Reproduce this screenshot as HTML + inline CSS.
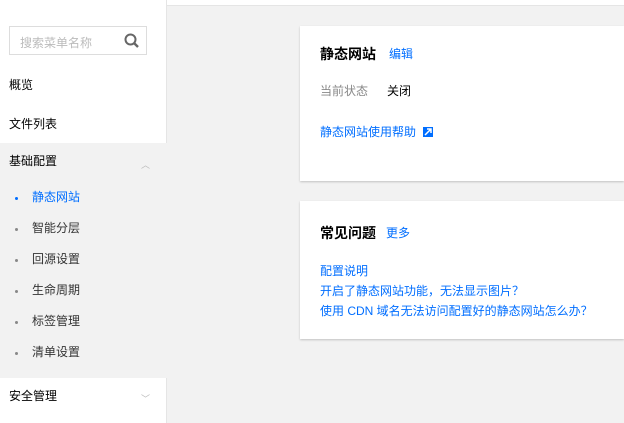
<!DOCTYPE html><html><head><meta charset="utf-8"><style>
*{margin:0;padding:0;box-sizing:border-box}
body{width:624px;height:423px;overflow:hidden;background:#f2f2f2;font-family:"Liberation Sans","Noto Sans CJK SC",sans-serif;font-size:12px;color:#000;position:relative}
.side{position:absolute;left:0;top:0;width:167px;height:423px;background:#fff;border-right:1px solid #e5e5e5}
.search{position:absolute;left:9px;top:26px;width:138px;height:29px;border:1px solid #ddd;color:#bbb;padding:7px 0 0 10px}
.it{position:absolute;left:9px;line-height:16px}
.grp{position:absolute;left:0;top:143px;width:167px;height:235px;background:#f2f2f2}
.sub{position:absolute;left:32px;color:#333;line-height:16px}
.dot{position:absolute;left:15px;width:3px;height:3px;border-radius:50%;background:#888}
.card{position:absolute;left:300px;width:324px;background:#fff;box-shadow:0 1px 2px rgba(0,0,0,.2)}
a{color:#006eff;text-decoration:none}
.t{position:absolute;left:20px;font-weight:bold;font-size:14px}
.arr{position:absolute;left:141px;color:#bbb;font-size:9px}
</style></head><body>
<div style="position:absolute;left:167px;top:0;width:457px;height:6px;background:#fff;border-bottom:1px solid #e5e5e5"></div>
<div class="side">
<div class="search">搜索菜单名称
<svg style="position:absolute;right:6px;top:6px" width="16" height="16" viewBox="0 0 16 16"><circle cx="6.5" cy="6.5" r="5" fill="none" stroke="#666" stroke-width="2"/><path d="M10 10l4 4" stroke="#666" stroke-width="2.4"/></svg></div>
<div class="it" style="top:77px">概览</div>
<div class="it" style="top:116px">文件列表</div>
<div class="grp"></div>
<div class="it" style="top:153px">基础配置</div><div class="arr" style="top:158px">︿</div>
<div class="dot" style="top:197px;background:#006eff"></div><div class="sub" style="top:189px;color:#006eff">静态网站</div>
<div class="dot" style="top:228px"></div><div class="sub" style="top:220px">智能分层</div>
<div class="dot" style="top:259px"></div><div class="sub" style="top:251px">回源设置</div>
<div class="dot" style="top:290px"></div><div class="sub" style="top:282px">生命周期</div>
<div class="dot" style="top:321px"></div><div class="sub" style="top:313px">标签管理</div>
<div class="dot" style="top:352px"></div><div class="sub" style="top:344px">清单设置</div>
<div class="it" style="top:388px">安全管理</div><div class="arr" style="top:392px">﹀</div>
</div>
<div class="card" style="top:26px;height:155px">
<div class="t" style="top:18px">静态网站</div><a style="position:absolute;left:89px;top:19px">编辑</a>
<div style="position:absolute;left:20px;top:56px;color:#888">当前状态</div><div style="position:absolute;left:87px;top:56px">关闭</div>
<a style="position:absolute;left:20px;top:97px">静态网站使用帮助</a>
<svg style="position:absolute;left:123px;top:101px" width="10" height="10" viewBox="0 0 10 10"><rect width="10" height="10" fill="#006eff"/><path d="M2 8L8 2M4 2h4v4" stroke="#fff" stroke-width="1.5" fill="none"/></svg>
</div>
<div class="card" style="top:201px;height:138px">
<div class="t" style="top:22px">常见问题</div><a style="position:absolute;left:86px;top:23px">更多</a>
<a style="position:absolute;left:20px;top:61px">配置说明</a>
<a style="position:absolute;left:20px;top:81px">开启了静态网站功能，无法显示图片？</a>
<a style="position:absolute;left:20px;top:101px">使用 CDN 域名无法访问配置好的静态网站怎么办？</a>
</div>
</body></html>
